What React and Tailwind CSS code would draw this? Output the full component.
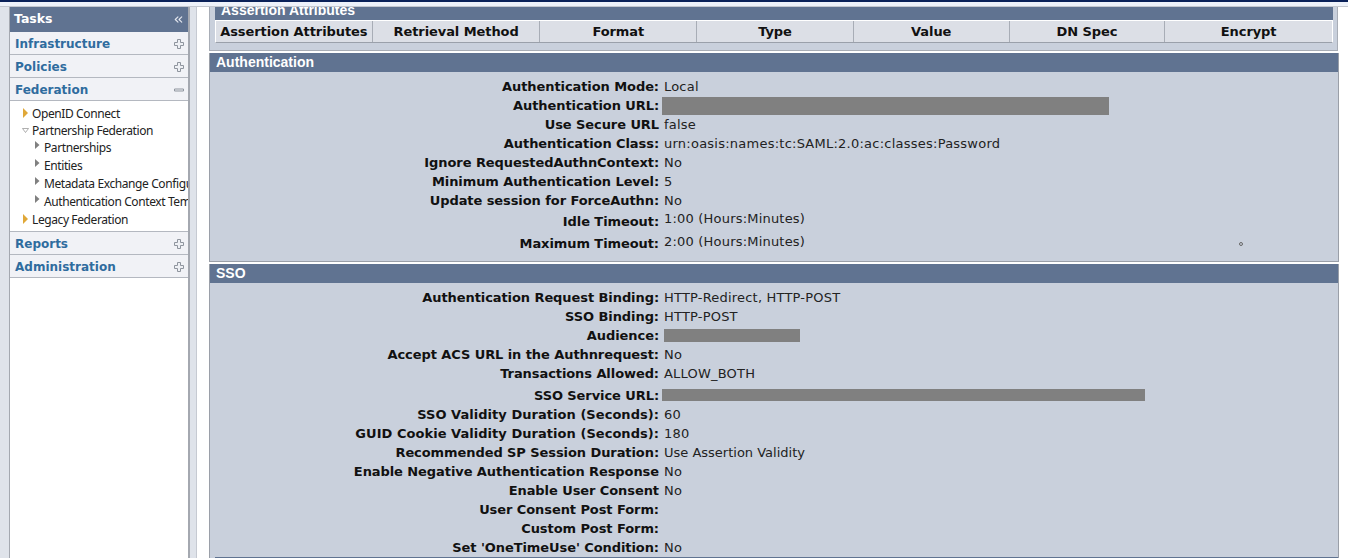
import { ChevronsLeft } from 'lucide-react';

const columns = [
  ['Assertion Attributes', 'w-[157px]'],
  ['Retrieval Method', 'w-[168px]'],
  ['Format', 'w-[157px]'],
  ['Type', 'w-[157px]'],
  ['Value', 'w-[156px]'],
  ['DN Spec', 'w-[156px]'],
  ['Encrypt', 'w-[167px]'],
];

const authRows = [
  { label: 'Authentication Mode:', value: 'Local' },
  { label: 'Authentication URL:', mask: 'w-[447px] h-[18px] -ml-[2px]' },
  { label: 'Use Secure URL', value: 'false' },
  { label: 'Authentication Class:', value: 'urn:oasis:names:tc:SAML:2.0:ac:classes:Password', valueClass: 'tracking-[0.24px]' },
  { label: 'Ignore RequestedAuthnContext:', value: 'No' },
  { label: 'Minimum Authentication Level:', value: '5' },
  { label: 'Update session for ForceAuthn:', value: 'No' },
  { label: 'Idle Timeout:', value: '1:00 (Hours:Minutes)', tall: 'h-[23px]', valueClass: 'tracking-[0.2px] -mt-[5px]' },
  { label: 'Maximum Timeout:', value: '2:00 (Hours:Minutes)', tall: 'h-[22px]', valueClass: 'tracking-[0.2px] -mt-[5px]' },
];

const ssoRows = [
  { label: 'Authentication Request Binding:', value: 'HTTP-Redirect, HTTP-POST' },
  { label: 'SSO Binding:', value: 'HTTP-POST' },
  { label: 'Audience:', mask: 'w-[136px] h-[13px]' },
  { label: 'Accept ACS URL in the Authnrequest:', value: 'No' },
  { label: 'Transactions Allowed:', value: 'ALLOW_BOTH' },
  { label: 'SSO Service URL:', mask: 'w-[483px] h-[12px] -ml-[2px] -mt-[1px]', tall: 'h-[22px] pt-[3px]' },
  { label: 'SSO Validity Duration (Seconds):', value: '60', labelClass: 'tracking-[0.04px]' },
  { label: 'GUID Cookie Validity Duration (Seconds):', value: '180', labelClass: 'tracking-[0.04px]' },
  { label: 'Recommended SP Session Duration:', value: 'Use Assertion Validity', valueClass: 'tracking-normal' },
  { label: 'Enable Negative Authentication Response', value: 'No' },
  { label: 'Enable User Consent', value: 'No' },
  { label: 'User Consent Post Form:', value: '' },
  { label: 'Custom Post Form:', value: '' },
  { label: "Set 'OneTimeUse' Condition:", value: 'No' },
];

const PlusIcon = () => (
  <svg width="10" height="10" viewBox="0 0 10 10" className="shrink-0">
    <path d="M3.5 .5h3v3h3v3h-3v3h-3v-3h-3v-3h3z" fill="#eef0f4" stroke="#8f959e" />
  </svg>
);

const MinusIcon = () => (
  <svg width="10" height="10" viewBox="0 0 10 10" className="shrink-0">
    <path d="M.5 4h9v2h-9z" fill="#eef0f4" stroke="#8f959e" />
  </svg>
);

const Caret = ({ color = '#808080', tall }) => (
  <svg width="5" height={tall ? 10 : 8} viewBox={tall ? '0 0 5 10' : '0 0 5 8'} className="shrink-0">
    <path d={tall ? 'M0 0L5 5L0 10z' : 'M0 0L4.5 4L0 8z'} fill={color} />
  </svg>
);

const CaretDown = () => (
  <svg width="7" height="5" viewBox="0 0 7 5" className="shrink-0">
    <path d="M0.5 0.5h6L3.5 4.5z" fill="#fff" stroke="#8d8d8d" strokeWidth="0.7" />
  </svg>
);

const AccordionHead = ({ title, open }) => (
  <div className="h-[23px] pt-[1px] flex items-center justify-between pl-[5px] pr-[4px] bg-[#f1f2f6] border-b border-[#b4b8c0]">
    <span className='font-["DejaVu_Sans",Verdana,sans-serif] font-bold text-[12px] text-[#2f6c9e]'>{title}</span>
    {open ? <MinusIcon /> : <PlusIcon />}
  </div>
);

// nested rows have a smaller caret sitting a bit above the text
const TreeItem = ({ icon, label, nested }) => (
  <div className={`flex items-center whitespace-nowrap ${nested ? 'h-[18px]' : 'h-[17px]'}`}>
    <span className={`w-[11px] flex justify-center shrink-0 ${nested ? '-mt-[6px]' : '-mt-[1px]'}`}>{icon}</span>
    <span className={nested ? 'ml-[1px]' : 'ml-[1px]'}>{label}</span>
  </div>
);

const DetailRow = ({ label, value, mask, tall, labelClass = 'tracking-[-0.08px]', valueClass = 'tracking-[0.2px]' }) => (
  <div className={`flex items-center ${tall || 'h-[19px]'}`}>
    <div className={`w-[449px] shrink-0 text-right font-bold text-[#111] whitespace-nowrap ${labelClass}`}>{label}</div>
    <div className={`ml-[5px] flex items-center text-[#222] whitespace-nowrap ${valueClass}`}>
      {mask ? <div className={`bg-[#808080] ${mask}`} /> : value}
    </div>
  </div>
);

const Section = ({ title, children }) => (
  <section className="bg-[#c9d0dc] border-x border-[#9a9fa8]">
    <div className="h-[19px] flex items-center px-[6px] bg-[#607391] text-white font-bold text-[14px] font-['Liberation_Sans',Arial,sans-serif]">
      {title}
    </div>
    {children}
  </section>
);

export default function App() {
  return (
    <div className='h-[558px] w-[1348px] overflow-hidden bg-white text-[13px] font-["DejaVu_Sans",Verdana,sans-serif]'>
      <div className="h-[2px] bg-[#0a2159]" />
      <div className="h-[5px] bg-[#eef2fa] border-b border-[#c4c8d0]" />
      <div className="flex h-[551px]">
        {/* left task panel */}
        <aside className="w-[197px] shrink-0 pl-[9px] pr-[6px] bg-[#dfe3ea] border-r border-[#c6cad2]">
          <div className="h-full bg-white border-r-2 border-l border-[#a4a8b0]">
            <div className="h-[25px] flex items-center justify-between pl-[4px] pr-[3px] bg-[#607391] text-white font-bold text-[12.5px]">
              <span>Tasks</span>
              <ChevronsLeft size={13} strokeWidth={2} className="text-[#e6e9f0]" />
            </div>
            <AccordionHead title="Infrastructure" />
            <AccordionHead title="Policies" />
            <AccordionHead title="Federation" open />
            <div className="h-[131px] overflow-hidden pt-[4px] pl-[10px] text-[12px] tracking-[-0.4px] text-[#222] border-b border-[#b4b8c0] font-['Noto_Sans','DejaVu_Sans',sans-serif]">
              <TreeItem icon={<Caret color="#e0a838" tall />} label="OpenID Connect" />
              <TreeItem icon={<CaretDown />} label="Partnership Federation" />
              <div className="pl-[12px]">
                <TreeItem nested icon={<Caret />} label="Partnerships" />
                <TreeItem nested icon={<Caret />} label="Entities" />
                <TreeItem nested icon={<Caret />} label="Metadata Exchange Configuration" />
                <TreeItem nested icon={<Caret />} label="Authentication Context Templates" />
              </div>
              <TreeItem icon={<Caret color="#e0a838" tall />} label="Legacy Federation" />
            </div>
            <AccordionHead title="Reports" />
            <AccordionHead title="Administration" />
          </div>
        </aside>

        {/* main content */}
        <main className="w-[1142px] shrink-0 pl-[12px]">
          <div className="w-[1130px]">
            <div className="pl-[5px] pr-[4px] pb-[7px] bg-[#c9d0dc] border-r border-b border-l border-[#a8adb6] mr-[1px]">
              <div className="h-[13px] overflow-hidden px-[6px] bg-[#607391] text-white font-bold text-[14px] leading-[13px] font-['Liberation_Sans',Arial,sans-serif]">
                <div className="-mt-[3px]">Assertion Attributes</div>
              </div>
              <div className="flex h-[23px] bg-[#dcdfe6] border border-white border-b-[#9aa0aa]">
                {columns.map(([name, width]) => (
                  <div
                    key={name}
                    className={`${width} flex items-center justify-center font-bold text-[#111] tracking-[-0.08px] border-r border-[#a8adb6] last:border-r-0 whitespace-nowrap`}
                  >
                    {name}
                  </div>
                ))}
              </div>
            </div>
            <div className="h-[2px]" />
            <Section title="Authentication">
              <div className="relative pt-[5px] h-[190px] border-b border-[#9a9fa8]">
                {authRows.map((row) => <DetailRow key={row.label} {...row} />)}
                <span className="absolute left-[1029px] top-[170px] w-[4px] h-[4px] rounded-full border border-[#666]" />
              </div>
            </Section>
            <div className="h-[2px]" />
            <Section title="SSO">
              <div className="pt-[5px]">
                {ssoRows.map((row) => <DetailRow key={row.label} {...row} />)}
              </div>
              <div className="ml-[5px] h-[2px] bg-[#607391]" />
            </Section>
          </div>
        </main>
      </div>
    </div>
  );
}
